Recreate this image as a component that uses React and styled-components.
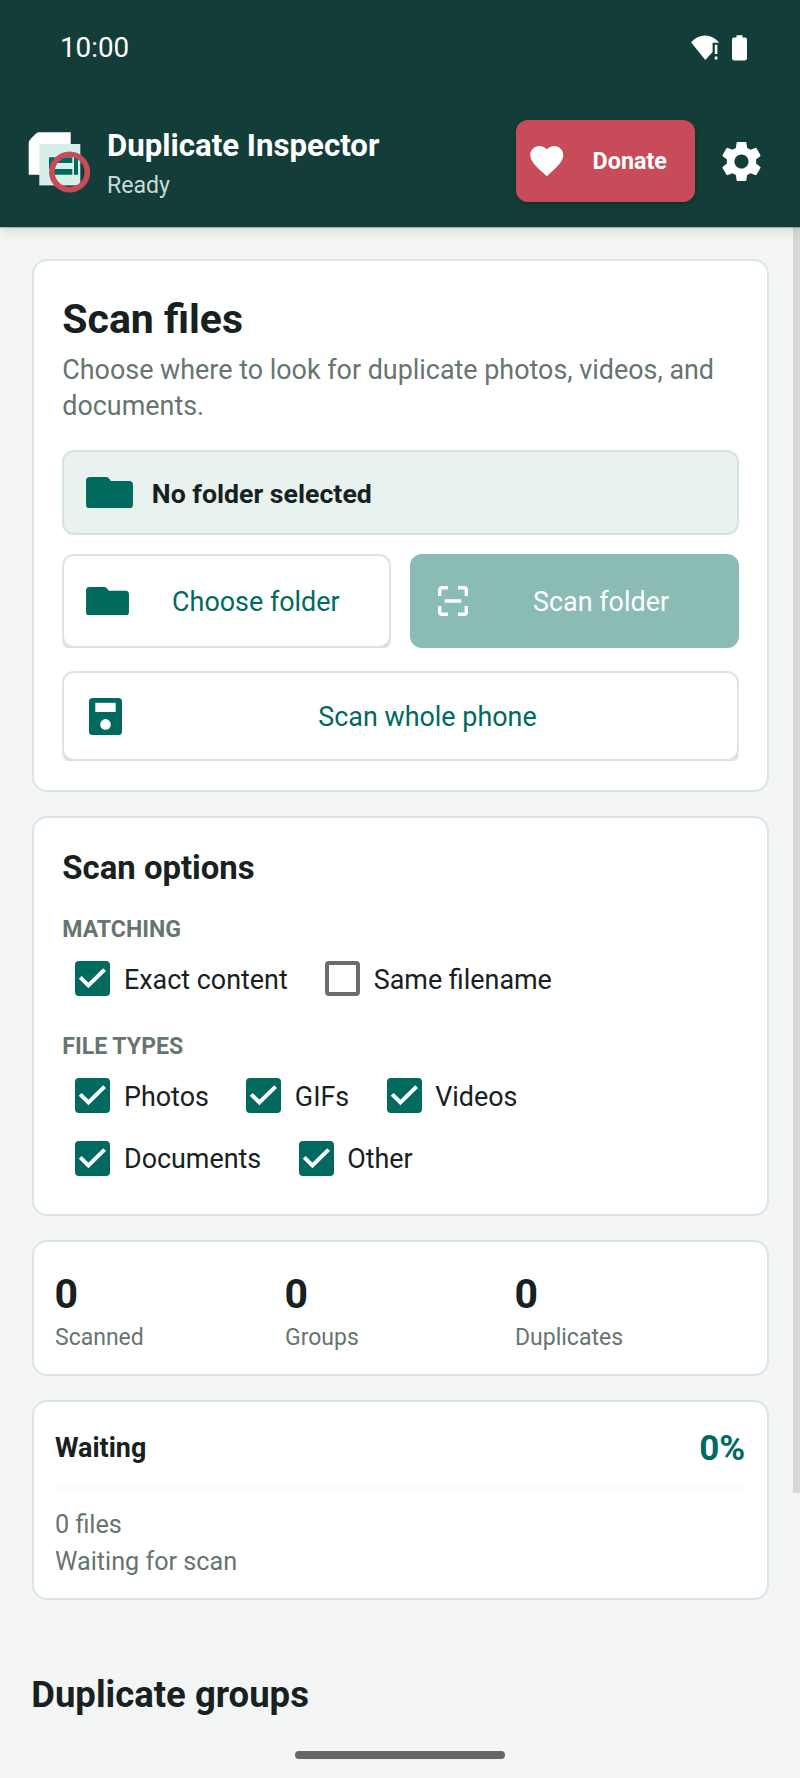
import React, { useState } from 'react'
import styled, { createGlobalStyle, css } from 'styled-components';

const GlobalStyle = createGlobalStyle`
  * {
    box-sizing: border-box;
  }
  body {
    margin: 0;
    background-color: #f3f6f5;
    color: #17211f;
    font-family: Roboto, sans-serif;
  }
`

const Screen = styled.div`
  position: relative;
  width: 800px;
  height: 1778px;
  display: flex;
  flex-direction: column;
  overflow: hidden;
  background-color: #f3f6f5;
`

const Header = styled.header`
  position: relative;
  z-index: 1;
  flex-shrink: 0;
  height: 227px;
  background-color: #133d38;
  color: white;
  box-shadow: 0 1px 1px rgba(0, 0, 0, 0.2), 0 4px 12px rgba(0, 0, 0, 0.12);
`

const StatusBar = styled.div`
  height: 96px;
  display: flex;
  align-items: center;
  justify-content: space-between;
  padding: 0 53px 0 60px;
  font-size: 27.8px;
  .clock {
    padding-bottom: 1px;
  }
  .status-icons {
    display: flex;
    gap: 13px;
  }
`

const AppBar = styled.div`
  height: 131px;
  display: flex;
  align-items: center;
  padding: 0 35px 0 28px;
`

const AppTitle = styled.div`
  margin: 9px auto 0 17px;
  line-height: 40px;
  .title {
    font-size: 31.2px;
    font-weight: 700;
  }
  .state {
    font-size: 23.1px;
    color: #c7dcd7;
  }
`

const DonateButton = styled.button`
  width: 179px;
  height: 82px;
  display: flex;
  align-items: center;
  gap: 26.5px;
  margin: 0 23.5px 1px 0;
  padding: 0 0 0 11px;
  border: none;
  border-radius: 12px;
  background-color: #c84b5a;
  color: white;
  font: 700 23.3px Roboto, sans-serif;
  box-shadow: 0 2px 4px rgba(0, 0, 0, 0.22);
  svg {
    margin-bottom: 1px;
  }
`

const Body = styled.div`
  flex-grow: 1;
  display: flex;
  align-items: flex-start;
`

const Content = styled.main`
  flex-grow: 1;
  display: flex;
  flex-direction: column;
  gap: 24px;
  padding: 32px 24px 0 32px;
`

const ScrollThumb = styled.div`
  width: 8px;
  height: 1266px;
  background-color: #d5d8d7;
`

const Card = styled.section`
  height: ${({ $height }) => $height}px;
  padding: ${({ $padding }) => $padding};
  border: 2px solid #dae6e2;
  border-radius: 15px;
  background-color: white;
`

const CardTitle = styled.h2`
  margin: 0;
  font-weight: 700;
  font-size: ${({ $large }) => ($large ? 41 : 32.9)}px;
  line-height: ${({ $large }) => ($large ? 48 : 40)}px;
`

const Description = styled.p`
  margin: 10px 0 0;
  font-size: 26.9px;
  line-height: 35.3px;
  color: #66756f;
`

const SelectedFolder = styled.div`
  height: 85px;
  display: flex;
  align-items: center;
  gap: 19px;
  margin-top: 26px;
  padding: 3px 0 0 21.5px;
  border: 2px solid #d6e4e0;
  border-radius: 12px;
  background-color: #e8f2ef;
  font-size: 26.7px;
  font-weight: 700;
  svg {
    margin-top: -3px;
  }
`

const ButtonRow = styled.div`
  display: grid;
  grid-template-columns: 1fr 1fr;
  gap: 19px;
  margin: 19px 0 23px;
`

const outlined = css`
  border: 2px solid #dae6e2;
  background-color: white;
  color: #006a5e;
  /* the elevation shadow only shows in the corners of the button box */
  box-shadow: 0 2px 3px rgba(0, 0, 0, 0.18);
  clip-path: inset(0);
`

const filled = css`
  border: none;
  background-color: #8bbbb5;
  color: white;
`

const ActionButton = styled.button`
  width: 100%;
  height: ${({ $height }) => $height}px;
  display: flex;
  align-items: center;
  padding: ${({ $padding }) => $padding};
  border-radius: 12px;
  font: 400 26.9px Roboto, sans-serif;
  ${({ $filled }) => ($filled ? filled : outlined)}
  span {
    flex-grow: 1;
    padding-top: 2px;
    text-align: center;
  }
`

const GroupLabel = styled.h3`
  margin: ${({ $top }) => $top}px 0 3.6px;
  font-size: 23.1px;
  font-weight: 700;
  line-height: 28px;
  color: #66756f;
`

const CheckRow = styled.div`
  display: flex;
  height: 62.3px;
  gap: 24.3px;
`

const CheckItem = styled.label`
  display: flex;
  align-items: center;
  gap: 13.5px;
  padding-left: 13.2px;
  font-size: 26.9px;
  span {
    padding-top: 2px;
  }
  input {
    display: none;
  }
`

const CheckBox = styled.div`
  width: 35px;
  height: 35px;
  border-radius: 4px;
  ${({ $checked }) => ($checked
    ? 'background-color: #006a5e;'
    : 'border: 4px solid #6c6c6c;')}
  svg {
    display: block;
  }
`

const Stats = styled.div`
  display: grid;
  grid-template-columns: repeat(3, 230px);
  .value {
    font-size: 41px;
    font-weight: 700;
    line-height: 48px;
    margin-left: -0.6px;
  }
  .label {
    margin-top: 6px;
    font-size: 23px;
    line-height: 28px;
    color: #66756f;
  }
`

const ProgressHead = styled.div`
  height: 44px;
  display: flex;
  align-items: center;
  justify-content: space-between;
  padding-right: 1px;
  font-size: 26.9px;
  font-weight: 700;
  .percent {
    font-size: 35px;
    color: #006a5e;
  }
`

const ProgressTrack = styled.div`
  height: 8px;
  margin: 14px 1px;
  background-color: #fafbfb;
`

const ProgressText = styled.div`
  font-size: 25.2px;
  line-height: 37.4px;
  color: #66756f;
`

const SectionTitle = styled.h2`
  margin: 49px 0 0 -0.8px;
  font-size: 36.5px;
  font-weight: 700;
  line-height: 44px;
`

const HomeHandle = styled.div`
  position: absolute;
  left: 295px;
  bottom: 19px;
  width: 210px;
  height: 8px;
  border-radius: 4px;
  background-color: #656766;
`

const Logo = () => (
  <svg width="62" height="62" viewBox="0 0 62 62">
    <path d="M0.7 43.7V12Q0.9 9.8 3 7.6L7 3.4Q9 1.3 11 1.3H42.7V43.7Z" fill="#fff" />
    <rect x="11.3" y="13" width="41" height="41.4" fill="#d8efe9" />
    <path d="M21 26.3H44.3V32.3H25V38H44.3V43.7H26V38H21ZM46 26.3H50V43.7H46Z" fill="#006a5e" />
    <path d="M25 32H44.3V38H25Z" fill="#d8efe9" />
    <circle cx="41.6" cy="41" r="17.7" fill="none" stroke="#c84b5a" strokeWidth="5.6" />
  </svg>
)

const WifiIcon = () => (
  <svg width="28" height="26" viewBox="0 0 28 26">
    <path d="M0 7.2Q6 0.4 14 0.4T28 7.2L27.4 7.8H21.6V17L14.3 25Z" fill="#fff" />
    <path d="M23.8 9.8H26.4V19H23.8ZM23.8 21.6H26.4V24.4H23.8Z" fill="#fff" />
  </svg>
)

const BatteryIcon = () => (
  <svg width="15" height="26" viewBox="0 0 15 26">
    <path d="M4.5 0.2H10.5V2.6H13Q15 2.6 15 4.6V23.6Q15 25.4 13 25.4H2Q0 25.4 0 23.6V4.6Q0 2.6 2 2.6H4.5Z" fill="#fff" />
  </svg>
)

const HeartIcon = () => (
  <svg width="39.6" height="39.6" viewBox="0 0 24 24" fill="#fff">
    <path d="M12 21.35l-1.45-1.32C5.4 15.36 2 12.28 2 8.5 2 5.42 4.42 3 7.5 3c1.74 0 3.41.81 4.5 2.09C13.09 3.81 14.76 3 16.5 3 19.58 3 22 5.42 22 8.5c0 3.78-3.4 6.86-8.55 11.54L12 21.35z" />
  </svg>
)

const GearIcon = () => (
  <svg width="47" height="47" viewBox="0 0 24 24" fill="#fff">
    <path d="M19.43 12.98c.04-.32.07-.64.07-.98s-.03-.66-.07-.98l2.11-1.65c.19-.15.24-.42.12-.64l-2-3.46c-.12-.22-.39-.3-.61-.22l-2.49 1c-.52-.4-1.08-.73-1.69-.98l-.38-2.65C14.46 2.18 14.25 2 14 2h-4c-.25 0-.46.18-.49.42l-.38 2.65c-.61.25-1.17.59-1.69.98l-2.49-1c-.23-.09-.49 0-.61.22l-2 3.46c-.13.22-.07.49.12.64l2.11 1.65c-.04.32-.07.65-.07.98s.03.66.07.98l-2.11 1.65c-.19.15-.24.42-.12.64l2 3.46c.12.22.39.3.61.22l2.49-1c.52.4 1.08.73 1.69.98l.38 2.65c.03.24.24.42.49.42h4c.25 0 .46-.18.49-.42l.38-2.65c.61-.25 1.17-.59 1.69-.98l2.49 1c.23.09.49 0 .61-.22l2-3.46c.12-.22.07-.49-.12-.64l-2.11-1.65zM12 15.6c-1.98 0-3.6-1.62-3.6-3.6s1.62-3.6 3.6-3.6 3.6 1.62 3.6 3.6-1.62 3.6-3.6 3.6z" />
  </svg>
)

const FolderIcon = ({ width = 47 }) => (
  <svg width={width} height={width * 0.667} viewBox="0 0 47 31.4" fill="#006a5e">
    <path d="M4 0H20Q21.5 0 22.5 1L25 4H43.3Q47 4 47 7.7V27.7Q47 31.4 43.3 31.4H3.7Q0 31.4 0 27.7V3.7Q0 0 4 0Z" />
  </svg>
)

const ScanIcon = () => (
  <svg width="30" height="30" viewBox="0 0 30 30" fill="none" stroke="#fff" strokeWidth="3.4">
    <path d="M1.7 10V4Q1.7 1.7 4 1.7H10M20 1.7H26Q28.3 1.7 28.3 4V10M28.3 20V26Q28.3 28.3 26 28.3H20M10 28.3H4Q1.7 28.3 1.7 26V20M6.7 15H23.3" />
  </svg>
)

const StorageIcon = () => (
  <svg width="33" height="37" viewBox="0 0 33 37">
    <rect width="33" height="37" rx="3.5" fill="#006a5e" />
    <rect x="6.3" y="4.8" width="20.4" height="9.2" fill="#fff" />
    <circle cx="16.5" cy="26.4" r="5.3" fill="#fff" />
  </svg>
)

const TickIcon = () => (
  <svg width="35" height="35" viewBox="0 0 35 35">
    <path d="M5.2 16.3L13.4 24.5L29.6 8.6" fill="none" stroke="#fff" strokeWidth="4" />
  </svg>
)

const Option = ({ label, defaultChecked = true }) => {
  const [checked, setChecked] = useState(defaultChecked);

  return (
    <CheckItem>
      <input type="checkbox" checked={checked} onChange={() => setChecked(!checked)} />
      <CheckBox $checked={checked}>{checked && <TickIcon />}</CheckBox>
      <span>{label}</span>
    </CheckItem>
  )
}

const stats = [
  { label: 'Scanned', value: 0 },
  { label: 'Groups', value: 0 },
  { label: 'Duplicates', value: 0 },
];

export default function App() {
  return (
    <Screen>
      <GlobalStyle />
      <Header>
        <StatusBar>
          <span className="clock">10:00</span>
          <div className="status-icons">
            <WifiIcon />
            <BatteryIcon />
          </div>
        </StatusBar>
        <AppBar>
          <Logo />
          <AppTitle>
            <div className="title">Duplicate Inspector</div>
            <div className="state">Ready</div>
          </AppTitle>
          <DonateButton>
            <HeartIcon />
            Donate
          </DonateButton>
          <GearIcon />
        </AppBar>
      </Header>
      <Body>
        <Content>
          <Card $height={533} $padding="34.4px 28.5px 0 28.3px">
            <CardTitle $large>Scan files</CardTitle>
            <Description>
              Choose where to look for duplicate photos, videos, and documents.
            </Description>
            <SelectedFolder>
              <FolderIcon />
              No folder selected
            </SelectedFolder>
            <ButtonRow>
              <ActionButton $height={94} $padding="0 6px 0 21.5px">
                <FolderIcon width={43} />
                <span>Choose folder</span>
              </ActionButton>
              <ActionButton $filled $height={94} $padding="0 4.5px 0 28px">
                <ScanIcon />
                <span>Scan folder</span>
              </ActionButton>
            </ButtonRow>
            <ActionButton $height={90} $padding="1px 3.5px 0 24.5px">
              <StorageIcon />
              <span>Scan whole phone</span>
            </ActionButton>
          </Card>

          <Card $height={400} $padding="30.4px 28.5px 0 28.3px">
            <CardTitle>Scan options</CardTitle>
            <GroupLabel $top={27.4}>MATCHING</GroupLabel>
            <CheckRow>
              <Option label="Exact content" />
              <Option label="Same filename" defaultChecked={false} />
            </CheckRow>
            <GroupLabel $top={23.4}>FILE TYPES</GroupLabel>
            <CheckRow>
              <Option label="Photos" />
              <Option label="GIFs" />
              <Option label="Videos" />
            </CheckRow>
            <CheckRow>
              <Option label="Documents" />
              <Option label="Other" />
            </CheckRow>
          </Card>

          <Card $height={136} $padding="28.3px 21px 0">
            <Stats>
              {stats.map(({ label, value }) => (
                <div key={label}>
                  <div className="value">{value}</div>
                  <div className="label">{label}</div>
                </div>
              ))}
            </Stats>
          </Card>

          <Card $height={200} $padding="24px 21px 0">
            <ProgressHead>
              <span>Waiting</span>
              <span className="percent">0%</span>
            </ProgressHead>
            <ProgressTrack />
            <ProgressText>0 files</ProgressText>
            <ProgressText>Waiting for scan</ProgressText>
          </Card>

          <SectionTitle>Duplicate groups</SectionTitle>
        </Content>
        <ScrollThumb />
      </Body>
      <HomeHandle />
    </Screen>
  )
}
